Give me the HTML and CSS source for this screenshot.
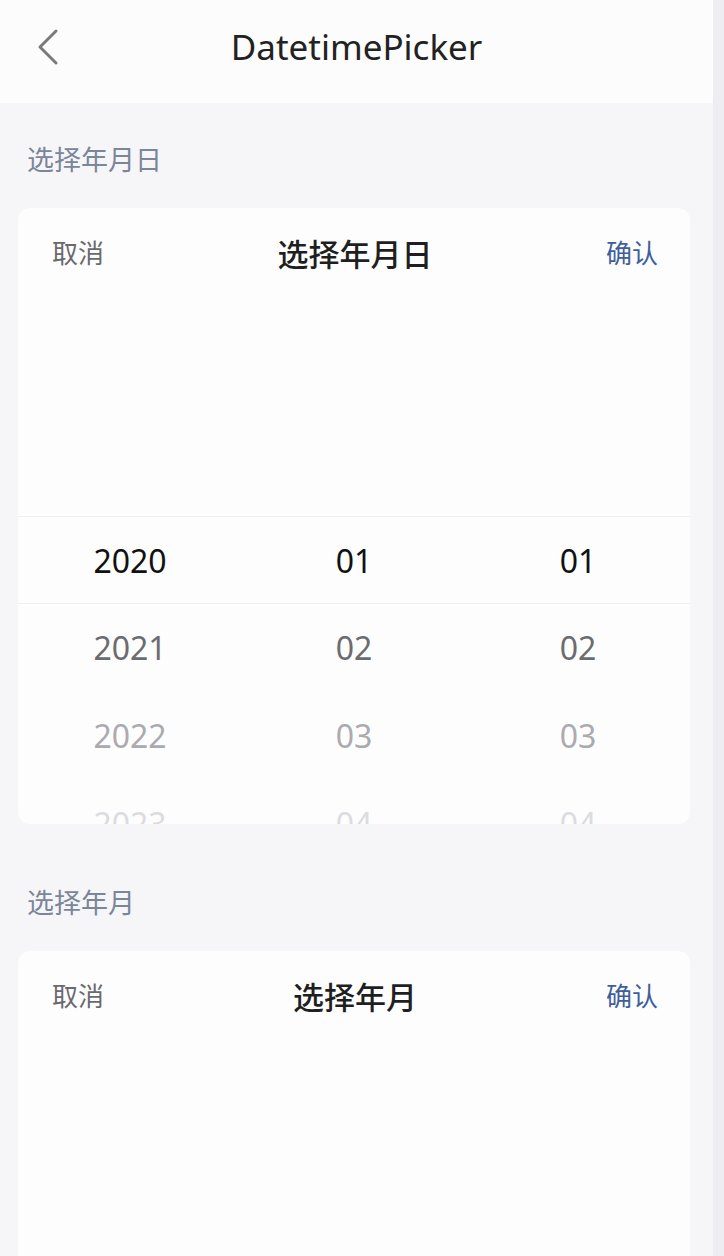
FILE: index.html
```html
<!DOCTYPE html>
<html lang="zh-CN">
<head>
    <meta charset="UTF-8">
    <meta name="viewport" content="width=device-width, initial-scale=1.0">
    <title>DatetimePicker</title>
    <link rel="stylesheet" href="styles.css">
</head>
<body>
    <div class="page">
        <div class="nav-bar">
            <div class="nav-left">
                <svg class="back-icon" width="24" height="38" viewBox="0 0 24 38">
                    <path d="M19 3 L3 19 L19 35" fill="none" stroke="#7a7a7e" stroke-width="3" stroke-linecap="round" stroke-linejoin="round"/>
                </svg>
            </div>
            <div class="nav-title">DatetimePicker</div>
            <div></div>
        </div>

        <div class="section-title">选择年月日</div>
        <div class="card">
            <div class="toolbar">
                <span class="btn-cancel">取消</span>
                <span class="toolbar-title">选择年月日</span>
                <span class="btn-confirm">确认</span>
            </div>
            <div class="picker" id="pickerDate"></div>
        </div>

        <div class="section-title second">选择年月</div>
        <div class="card">
            <div class="toolbar">
                <span class="btn-cancel">取消</span>
                <span class="toolbar-title">选择年月</span>
                <span class="btn-confirm">确认</span>
            </div>
            <div class="picker"></div>
        </div>
    </div>
    <div class="edge"></div>

    <script>
        const pickerDate = document.getElementById('pickerDate');
        const columns = [
            ['2020', '2021', '2022', '2023'],
            ['01', '02', '03', '04'],
            ['01', '02', '03', '04']
        ];

        columns.forEach(values => {
            let html = '<div class="picker-column">';
            values.forEach((value, index) => {
                const cls = index === 0 ? 'picker-item selected' : 'picker-item level-' + index;
                html += `<div class="${cls}">${value}</div>`;
            });
            html += '</div>';
            pickerDate.innerHTML += html;
        });
    </script>
</body>
</html>
```

FILE: styles.css
```css
body {
    font-family: 'Noto Sans', 'Noto Sans CJK SC', sans-serif;
    background-color: #f0f0f3;
    color: #222;
    margin: 0;
    padding: 0;
    display: flex;
    min-height: 100vh;
}
.page {
    width: 713px;
    background-color: #f6f6f9;
    padding-bottom: 40px;
}
.edge {
    flex: 1;
    background-color: #eeeef2;
}
.nav-bar {
    height: 103px;
    background: #fcfcfd;
    display: grid;
    grid-template-columns: 1fr auto 1fr;
    align-items: center;
}
.nav-left {
    padding-left: 37px;
    display: flex;
    align-items: center;
    padding-bottom: 9px;
}
.nav-title {
    font-size: 35px;
    color: #222;
    line-height: 40px;
    padding-bottom: 9px;
}
.section-title {
    padding: 40px 27px 31px;
    font-size: 27px;
    line-height: 34px;
    color: #7b8698;
}
.section-title.second {
    margin-top: 22px;
}
.card {
    margin: 0 23px 0 18px;
    background: #fdfdfe;
    border-radius: 12px;
    overflow: hidden;
}
.toolbar {
    height: 88px;
    display: grid;
    grid-template-columns: 1fr auto 1fr;
    align-items: center;
    padding: 0 32px 0 34px;
}
.btn-cancel {
    font-size: 26px;
    color: #6a6a6e;
}
.toolbar-title {
    font-size: 31px;
    color: #1f1f1f;
    font-weight: 500;
}
.btn-confirm {
    font-size: 26px;
    color: #3f5f9a;
    justify-self: end;
}
.picker {
    height: 528px;
    display: grid;
    grid-template-columns: repeat(3, 1fr);
    overflow: hidden;
}
.picker-column {
    padding-top: 220px;
    text-align: center;
}
.picker-item {
    height: 88px;
    line-height: 88px;
    font-size: 32px;
    box-sizing: border-box;
}
.picker-item.selected {
    color: #111;
    border-top: 1px solid #f0f0f2;
    border-bottom: 1px solid #f0f0f2;
}
.level-1 {
    color: #6c6c70;
}
.level-2 {
    color: #ababaf;
}
.level-3 {
    color: #dcdce0;
}
```
